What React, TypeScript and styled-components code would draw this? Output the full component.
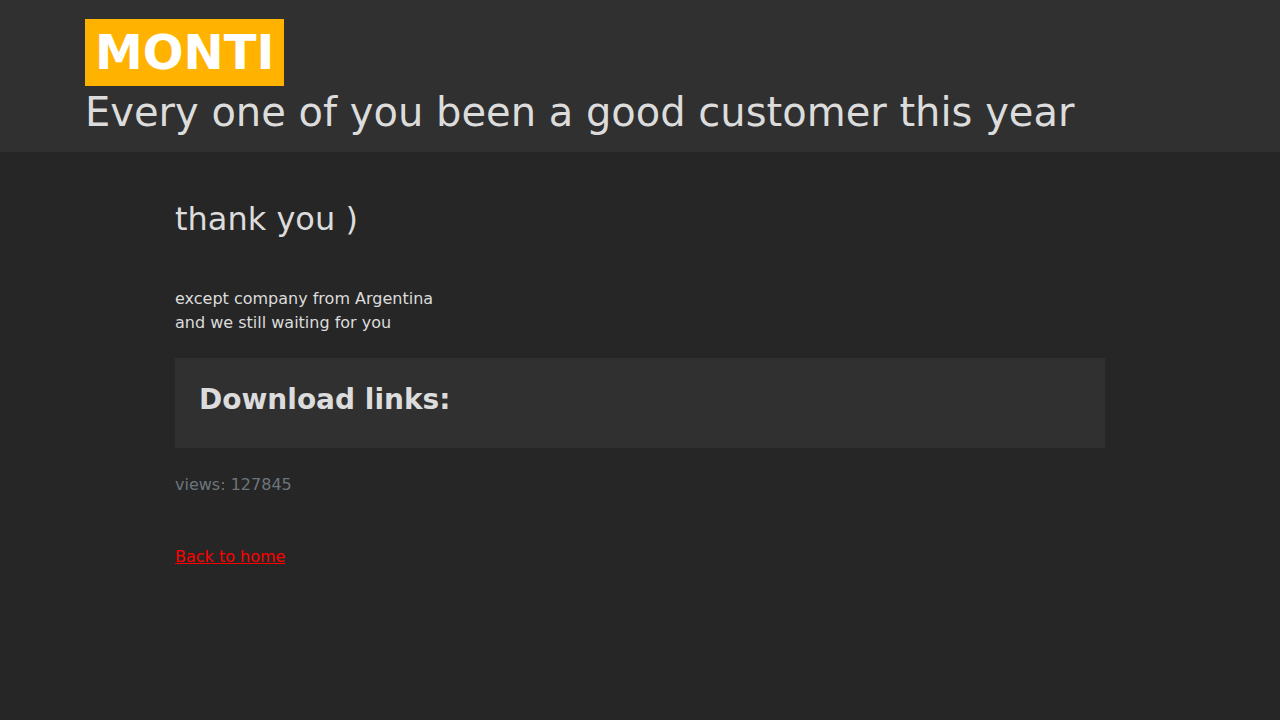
import React from 'react';
import styled, { createGlobalStyle } from 'styled-components';

const GlobalStyle = createGlobalStyle`
  *, *::before, *::after { box-sizing: border-box; }
  body {
    margin: 0;
    background: #262626;
    color: #dcdcdc;
    font-family: "DejaVu Sans", sans-serif;
    font-size: 16px;
    line-height: 24px;
  }
`;

const Header = styled.header`
  background: #303030;
  padding: 19px 0 16px;
`;

const Container = styled.div`
  max-width: 1140px;
  margin: 0 auto;
  padding: 0 15px;
`;

const Brand = styled.div`
  width: fit-content;
  margin-bottom: 2px;
  padding: 0 10px;
  background: #ffb300;
  color: #fff;
  font-size: 48px;
  font-weight: 700;
  line-height: 67px;
`;

const Title = styled.h1`
  margin: 0;
  font-size: 40px;
  font-weight: 400;
  line-height: 48px;
`;

const Main = styled.main`
  max-width: 960px;
  margin: 0 auto;
  padding: 48px 15px;
`;

const Subtitle = styled.h2`
  margin: 0 0 49px;
  font-size: 32px;
  font-weight: 400;
  line-height: 38px;
`;

const Text = styled.p`
  margin: 0 0 23px;
`;

const Downloads = styled.section`
  margin-bottom: 25px;
  padding: 24px;
  background: #303030;
`;

const DownloadsTitle = styled.h3`
  margin: 0 0 6px;
  font-size: 28px;
  font-weight: 700;
  line-height: 36px;
`;

const Views = styled.p`
  margin: 0 0 48px;
  color: #6c757d;
`;

const HomeLink = styled.a`
  color: #ff0000;
  text-decoration: underline;
`;

export default function App() {
  return (
    <>
      <GlobalStyle />
      <Header>
        <Container>
          <Brand>MONTI</Brand>
          <Title>Every one of you been a good customer this year</Title>
        </Container>
      </Header>
      <Main>
        <Subtitle>thank you )</Subtitle>
        <Text>
          except company from Argentina
          <br />
          and we still waiting for you
        </Text>
        <Downloads>
          <DownloadsTitle>Download links:</DownloadsTitle>
        </Downloads>
        <Views>views: 127845</Views>
        <HomeLink href="/">Back to home</HomeLink>
      </Main>
    </>
  );
}
